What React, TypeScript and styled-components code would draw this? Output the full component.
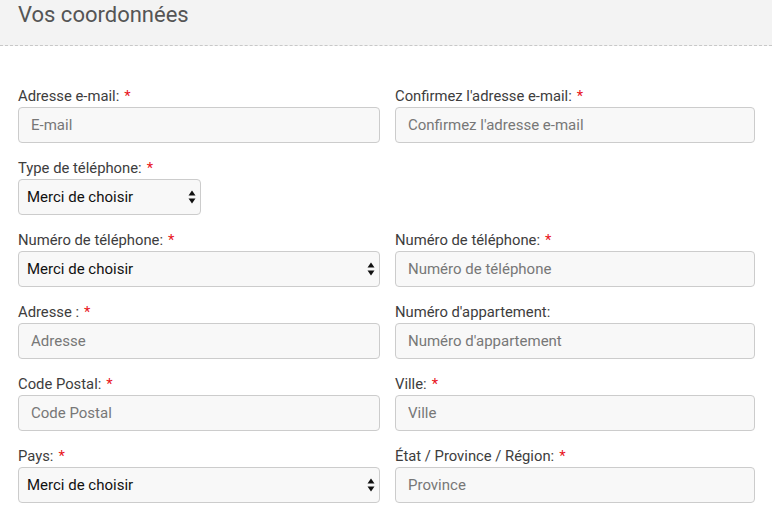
import styled, { createGlobalStyle } from "styled-components";

const GlobalStyle = createGlobalStyle`
  html, body {
    margin: 0;
    padding: 0;
    background: #ffffff;
  }
  body {
    font-family: Roboto, "Liberation Sans", Arial, sans-serif;
  }
  * {
    box-sizing: border-box;
  }
`;

type Field =
  | { kind: "input"; label: string; placeholder: string; required?: boolean }
  | { kind: "select"; label: string; required?: boolean; narrow?: boolean }
  | { kind: "empty" };

const rows: Field[][] = [
  [
    { kind: "input", label: "Adresse e-mail:", placeholder: "E-mail", required: true },
    { kind: "input", label: "Confirmez l'adresse e-mail:", placeholder: "Confirmez l'adresse e-mail", required: true },
  ],
  [{ kind: "select", label: "Type de téléphone:", required: true, narrow: true }, { kind: "empty" }],
  [
    { kind: "select", label: "Numéro de téléphone:", required: true },
    { kind: "input", label: "Numéro de téléphone:", placeholder: "Numéro de téléphone", required: true },
  ],
  [
    { kind: "input", label: "Adresse :", placeholder: "Adresse", required: true },
    { kind: "input", label: "Numéro d'appartement:", placeholder: "Numéro d'appartement" },
  ],
  [
    { kind: "input", label: "Code Postal:", placeholder: "Code Postal", required: true },
    { kind: "input", label: "Ville:", placeholder: "Ville", required: true },
  ],
  [
    { kind: "select", label: "Pays:", required: true },
    { kind: "input", label: "État / Province / Région:", placeholder: "Province", required: true },
  ],
];

function SortArrows() {
  return (
    <ArrowIcon width="8" height="14" viewBox="0 0 8 14">
      <path d="M4 0.5 L7.5 5.5 L0.5 5.5 Z" fill="#111" />
      <path d="M4 13.5 L7.5 8.5 L0.5 8.5 Z" fill="#111" />
    </ArrowIcon>
  );
}

function FieldCell({ field }: { field: Field }) {
  if (field.kind === "empty") return <div />;
  return (
    <Group>
      <Label>
        {field.label}
        {field.required && <Star>*</Star>}
      </Label>
      {field.kind === "input" ? (
        <TextInput placeholder={field.placeholder} />
      ) : (
        <SelectWrap $narrow={field.narrow}>
          <Select defaultValue="">
            <option value="">Merci de choisir</option>
          </Select>
          <SortArrows />
        </SelectWrap>
      )}
    </Group>
  );
}

export default function App() {
  return (
    <>
      <GlobalStyle />
      <Page>
        <Header>
          <Title>Vos coordonnées</Title>
        </Header>
        <Form>
          {rows.map((row, i) => (
            <Row key={i}>
              {row.map((field, j) => (
                <FieldCell key={j} field={field} />
              ))}
            </Row>
          ))}
        </Form>
      </Page>
    </>
  );
}

const Page = styled.div`
  width: 772px;
`;

const Header = styled.div`
  height: 46px;
  background: #f3f3f3;
  border-bottom: 1px dashed #c8c8c8;
  padding: 1px 18px 0;
`;

const Title = styled.h2`
  margin: 0;
  font-size: 22px;
  line-height: 28px;
  font-weight: 400;
  color: #555555;
`;

const Form = styled.div`
  display: flex;
  flex-direction: column;
  gap: 15px;
  padding: 40px 17px 0 18px;
`;

const Row = styled.div`
  display: grid;
  grid-template-columns: 362px 360px;
  column-gap: 15px;
`;

const Group = styled.div`
  display: flex;
  flex-direction: column;
`;

const Label = styled.label`
  font-size: 14.8px;
  line-height: 20px;
  margin-bottom: 1px;
  color: #3d3d3d;
`;

const Star = styled.span`
  color: #e8141b;
  margin-left: 5px;
`;

const TextInput = styled.input`
  height: 36px;
  width: 100%;
  border: 1px solid #cccccc;
  border-radius: 4px;
  background: #f8f8f8;
  padding: 0 12px;
  font-family: inherit;
  font-size: 15px;
  color: #333;

  &::placeholder {
    color: #777777;
  }
`;

const SelectWrap = styled.div<{ $narrow?: boolean }>`
  position: relative;
  width: ${(p) => (p.$narrow ? "183px" : "100%")};
`;

const Select = styled.select`
  appearance: none;
  -webkit-appearance: none;
  height: 36px;
  width: 100%;
  border: 1px solid #cccccc;
  border-radius: 4px;
  background: #f8f8f8;
  padding: 0 24px 0 8px;
  font-family: inherit;
  font-size: 15px;
  color: #111111;
`;

const ArrowIcon = styled.svg`
  position: absolute;
  right: 5px;
  top: 11px;
  pointer-events: none;
`;
